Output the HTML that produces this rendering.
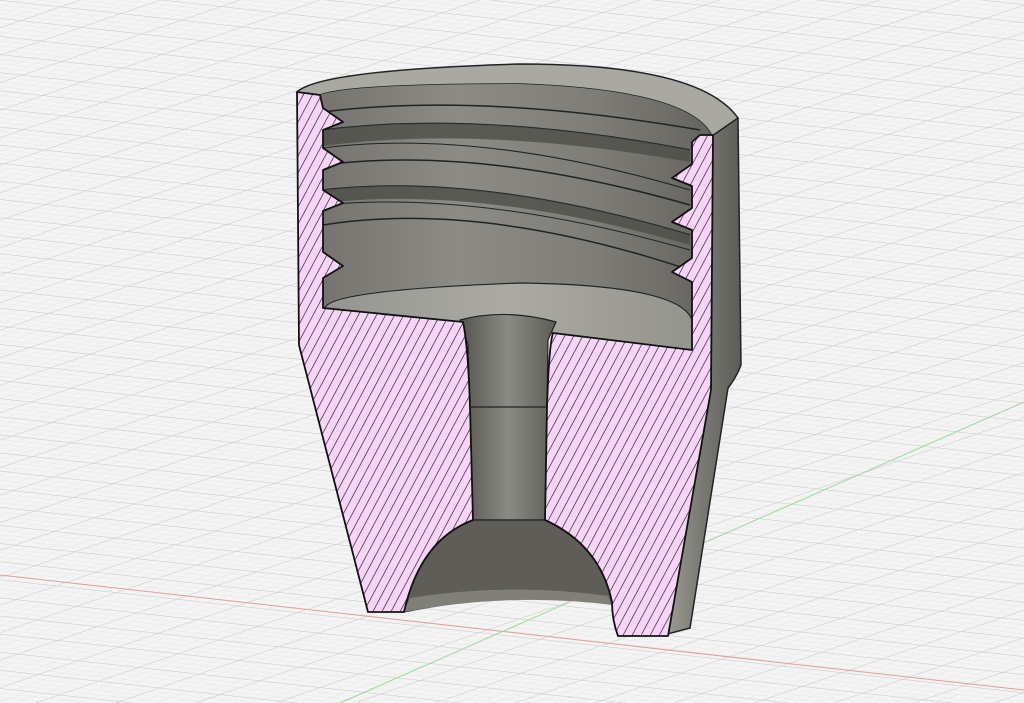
<!DOCTYPE html>
<html><head><meta charset="utf-8"><style>html,body{margin:0;padding:0;background:#f3f3f3}svg{display:block}</style></head>
<body>
<svg width="1024" height="703" viewBox="0 0 1024 703" xmlns="http://www.w3.org/2000/svg">
<defs>
<pattern id="minA" width="200" height="4.5" patternUnits="userSpaceOnUse" patternTransform="rotate(6.3)"><line x1="0" y1="0" x2="200" y2="0" stroke="#e3e3e3" stroke-width="0.8"/></pattern>
<pattern id="minB" width="200" height="6.5" patternUnits="userSpaceOnUse" patternTransform="rotate(-19)"><line x1="0" y1="0" x2="200" y2="0" stroke="#e6e6e6" stroke-width="0.8"/></pattern>
<pattern id="majA" width="200" height="18" patternUnits="userSpaceOnUse" patternTransform="rotate(6.3)"><line x1="0" y1="0" x2="200" y2="0" stroke="#c9c9c9" stroke-width="1"/></pattern>
<pattern id="majB" width="200" height="26" patternUnits="userSpaceOnUse" patternTransform="rotate(-19)"><line x1="0" y1="0" x2="200" y2="0" stroke="#cbcbcb" stroke-width="1"/></pattern>
<pattern id="hatch" width="8" height="20" patternUnits="userSpaceOnUse" patternTransform="rotate(28)"><rect width="8" height="20" fill="#f8d4f8"/><line x1="0" y1="0" x2="0" y2="20" stroke="#1a1a1a" stroke-width="1.3"/></pattern>
<linearGradient id="cav" x1="0" y1="0" x2="1" y2="0">
<stop offset="0" stop-color="#74736d"/><stop offset="0.35" stop-color="#8d8b85"/><stop offset="0.7" stop-color="#7f7d77"/><stop offset="1" stop-color="#64635e"/></linearGradient>
<linearGradient id="ext" x1="0" y1="0" x2="1" y2="0">
<stop offset="0" stop-color="#a2a19a"/><stop offset="0.5" stop-color="#7b7a74"/><stop offset="1" stop-color="#5d5c57"/></linearGradient>
<linearGradient id="bore" x1="0" y1="0" x2="1" y2="0">
<stop offset="0" stop-color="#55544f"/><stop offset="0.5" stop-color="#8b8a84"/><stop offset="1" stop-color="#5d5c57"/></linearGradient>
<linearGradient id="floor" x1="0" y1="0" x2="1" y2="0">
<stop offset="0" stop-color="#959490"/><stop offset="0.5" stop-color="#abaaa3"/><stop offset="1" stop-color="#94938d"/></linearGradient>
</defs>
<rect width="1024" height="703" fill="#f4f4f4"/>
<rect width="1024" height="703" fill="url(#minA)"/>
<rect width="1024" height="703" fill="url(#minB)"/>
<rect width="1024" height="703" fill="url(#majA)"/>
<rect width="1024" height="703" fill="url(#majB)"/>
<line x1="0" y1="575" x2="1024" y2="690" stroke="#e89a9a" stroke-width="1"/>
<line x1="340" y1="703" x2="1024" y2="402" stroke="#9ed89e" stroke-width="1"/>

<path d="M700 128 Q725 110 738 118 L741 365 Q736 378 728 388 L690 628 L660 636 L700 135 Z" fill="url(#ext)" stroke="#222" stroke-width="1.5"/>
<path d="M297 92 Q320 70 520 64 Q700 64 738 118 L712 136 Q690 90 520 84 Q350 84 320 95 Z" fill="#a9a8a1" stroke="#222" stroke-width="1.5"/>
<path d="M320 95 Q350 84 520 84 Q690 90 712 136 L692 142 L692 350 L553 330 L463 322 L323 308 Z" fill="url(#cav)"/>
<g fill="none" stroke="#222" stroke-width="1.5">
<path d="M323 112 Q480 92 700 130"/>
<path d="M323 130 Q480 110 690 150"/>
<path d="M323 148 Q480 128 690 190" stroke-width="1"/>
<path d="M323 165 Q480 145 690 205"/>
<path d="M323 190 Q480 172 690 235"/>
<path d="M323 205 Q480 190 690 250" stroke-width="1"/>
<path d="M323 225 Q480 200 690 270"/>
</g>
<path d="M323 130 Q480 110 690 150 L690 162 Q480 125 323 146 Z" fill="#4e4d49" opacity="0.8"/>
<path d="M323 190 Q480 172 690 235 L690 245 Q480 185 323 203 Z" fill="#4e4d49" opacity="0.8"/>
<path d="M325 308 Q330 290 520 283 Q680 285 692 320 L692 350 L553 333 L463 322 Z" fill="url(#floor)" stroke="#222" stroke-width="1.2"/>
<path d="M460 320 Q505 308 556 322 L548 340 L545 520 L473 520 L468 345 Z" fill="url(#bore)" stroke="#222" stroke-width="1.2"/>
<line x1="470" y1="407" x2="547" y2="407" stroke="#222" stroke-width="1.2"/>
<path d="M404 612 Q420 540 473 520 L545 520 Q600 545 612 602 Q510 590 404 612 Z" fill="#5e5d58" stroke="#222" stroke-width="1.2"/>
<path d="M410 598 Q510 582 608 596 L612 605 Q510 592 404 612 Z" fill="#807f78"/>
<path d="M297 92 L320 95 L323 108 L343 122 L323 130 L323 148 L343 162 L323 170 L323 190 L343 203 L323 211 L323 224 L323 252 L343 266 L323 278 L323 308 L463 322 Q468 345 470 407 L473 520 Q420 540 404 612 L368 612 L299 345 Z" fill="url(#hatch)" stroke="#111" stroke-width="1.8" stroke-linejoin="round"/>
<path d="M700 135 L713 135 L711 390 L668 636 L618 636 Q612 620 612 602 Q600 545 545 520 L547 407 Q549 345 553 333 L692 350 L692 282 L672 272 L692 258 L692 230 L672 222 L692 208 L692 186 L672 178 L692 164 L692 142 Z" fill="url(#hatch)" stroke="#111" stroke-width="1.8" stroke-linejoin="round"/>
</svg>
</body></html>
